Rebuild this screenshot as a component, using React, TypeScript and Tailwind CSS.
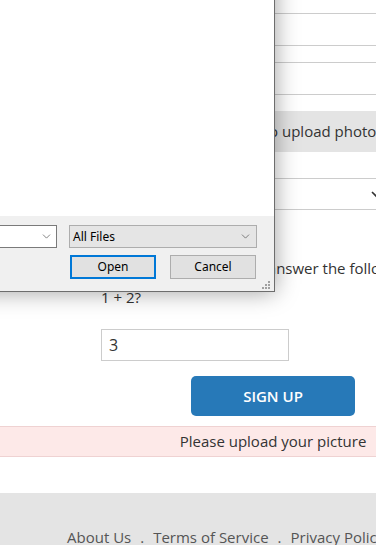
import { ChevronDown } from "lucide-react";

function FileDialog() {
    return (
        <div className="absolute left-[-400px] top-[-300px] w-[675px] h-[592px] flex flex-col bg-white border border-[#6d6d6d] shadow-[0_0_22px_rgba(0,0,0,0.38)] font-['Noto_Sans','Open_Sans',sans-serif] text-[12px] text-black">
            <div className="flex-1 bg-white" />
            <div className="relative h-[75px] bg-[#f0f0f0] pt-[9px] pr-[17px] flex flex-col items-end gap-[7px]">
                <div className="flex w-full gap-[12px]">
                    <div className="flex-1 h-[23px] bg-white border border-[#7a7a7a] flex items-center justify-end pr-[3px]">
                        <ChevronDown size={13} strokeWidth={1.2} className="text-[#444]" />
                    </div>
                    <div className="w-[188px] h-[23px] bg-[#e5e5e5] border border-[#adadad] flex items-center justify-between pl-[3px] pr-[4px]">
                        <span>All Files</span>
                        <ChevronDown size={13} strokeWidth={1.2} className="text-[#444]" />
                    </div>
                </div>
                <div className="flex gap-[14px] pr-[1px]">
                    <button className="w-[86px] h-[24px] bg-[#e1e1e1] border-2 border-[#0078d7] flex items-center justify-center">Open</button>
                    <button className="w-[86px] h-[24px] bg-[#e1e1e1] border border-[#adadad] flex items-center justify-center">Cancel</button>
                </div>
                <svg className="absolute right-[3px] bottom-[1px]" width="9" height="9" viewBox="0 0 9 9">
                    <g fill="#a0a0a0">
                        <rect x="6" y="0" width="2" height="2" />
                        <rect x="3" y="3" width="2" height="2" />
                        <rect x="6" y="3" width="2" height="2" />
                        <rect x="0" y="6" width="2" height="2" />
                        <rect x="3" y="6" width="2" height="2" />
                        <rect x="6" y="6" width="2" height="2" />
                    </g>
                </svg>
            </div>
        </div>
    );
}

export default function App() {
    return (
        <div className="relative w-[376px] h-[545px] overflow-hidden bg-white font-['Open_Sans',sans-serif] text-[15px] text-[#333]">
            <div className="w-[546px] flex flex-col">
                <div className="ml-[101px] w-[344px] flex flex-col">
                    <input className="mt-[13px] h-[33px] border border-[#cccccc] px-2 outline-none" />
                    <input className="mt-[16px] h-[33px] border border-[#cccccc] px-2 outline-none" />
                    <div className="mt-[16px] h-[41px] bg-[#e4e4e4] pl-[22px] flex items-center justify-center">
                        Click here to upload photo
                    </div>
                    <div className="mt-[26px] h-[32px] border-y border-[#cccccc] relative">
                        <svg className="absolute left-[270px] top-[12px]" width="10" height="7" viewBox="0 0 10 7">
                            <path d="M1 1 L5 5 L9 1" fill="none" stroke="#333" strokeWidth="1.6" />
                        </svg>
                    </div>
                    <p className="mt-[44px] leading-[29px]">
                        Are you human? Please answer the following
                        <br />
                        1 + 2?
                    </p>
                    <input
                        defaultValue="3"
                        className="mt-[17px] w-[188px] h-[32px] border border-[#cccccc] px-[7px] text-[16px] outline-none"
                    />
                    <button className="mt-[15px] mx-auto w-[164px] h-[40px] rounded-[5px] bg-[#2779b8] text-white text-[15px] font-semibold">
                        SIGN UP
                    </button>
                </div>
                <div className="mt-[10px] h-[31px] bg-[#fde9e8] border-y border-[#efd2d2] flex items-center justify-center">
                    Please upload your picture
                </div>
                <div className="mt-[36px] h-[80px] bg-[#e4e4e4] pt-[33px] pl-[67px] flex gap-[9px] text-[#555] whitespace-nowrap">
                    <span>About Us</span>
                    <span>.</span>
                    <span>Terms of Service</span>
                    <span>.</span>
                    <span>Privacy Policy</span>
                </div>
            </div>
            <FileDialog />
        </div>
    );
}
